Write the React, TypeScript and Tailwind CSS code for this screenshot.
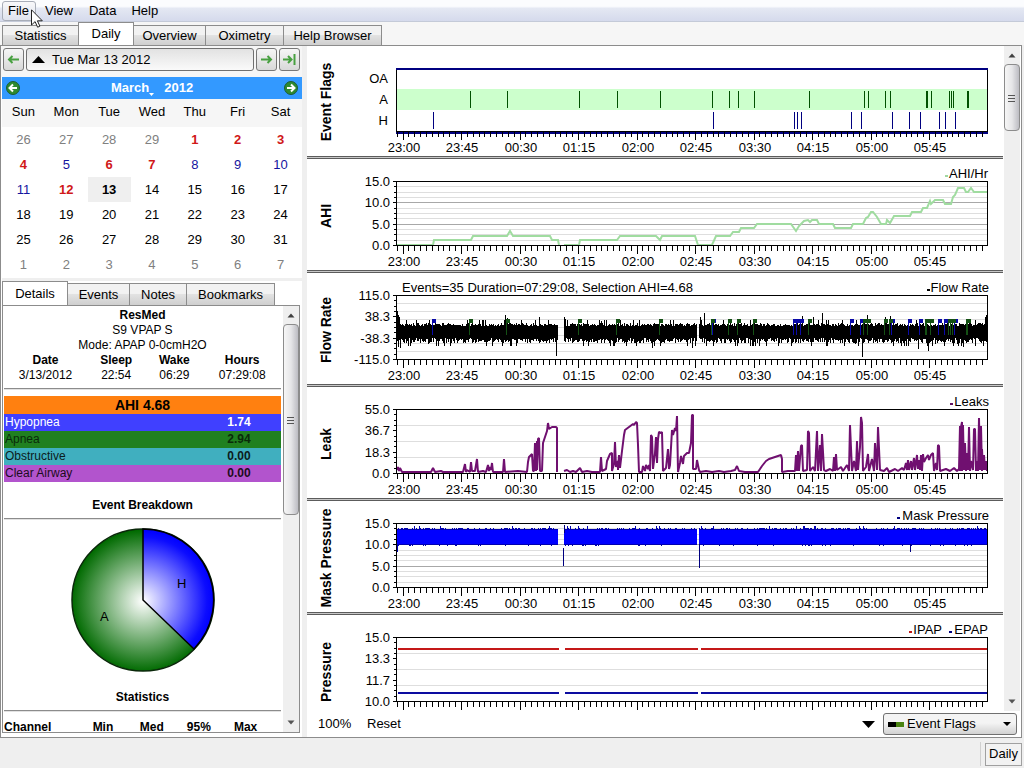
import type { ReactNode } from "react";

const NAVY = "#000080";
const PURPLE = "#701070";

type Point = [number, number];

/* ---------- recorded session data, in plot units ---------- */

const apneaFlags = [
  470, 507, 579, 617, 660, 712, 729, 738, 754, 809, 864, 868, 885, 890, 926, 927, 931, 949, 951, 953, 967, 968,
];
const hypopneaFlags = [433, 713, 794, 797, 801, 851, 861, 892, 909, 920, 939, 945, 955];

const ahiLines: string[] = [
  "397,86 433,86 434,81 471,81 473,77 507,77 510,72 513,77 550,77 552,81 558,81 559,86",
  "564,86 579,86 580,81 617,81 620,77 656,77 660,81 662,77 695,77 698,86 712,86 716,77 730,77 733,73 739,73 741,69 754,69 757,65 791,65 796,72 799,67 804,62 808,61 810,63 812,61 817,61 819,65 833,65 835,69 851,69 853,65 863,65 866,59 868,58 871,53 873,53 877,58 881,65 886,65 887,61 890,64 894,57 910,57 912,53 921,53 923,49 927,49 930,42 931,45 935,41 943,41 945,45 951,45 953,38 955,36 958,29 964,29 966,33 968,33 971,29 974,33 987,33",
];

const leakA: Point[] = [
  [397, 3], [398, 6], [399, 2], [400, 5], [402, 1], [431, 1], [433, 5], [435, 1], [441, 2], [443, 1], [463, 1],
  [465, 9], [466, 1], [467, 3], [470, 1], [471, 11], [472, 2], [475, 2], [477, 14], [478, 1], [483, 2], [486, 1],
  [488, 8], [489, 2], [490, 6], [491, 3], [492, 10], [493, 1], [503, 1], [504, 14], [505, 1], [518, 2], [527, 1],
  [528, 11], [529, 16], [532, 19], [533, 2], [534, 2], [535, 30], [536, 2], [537, 32], [537, 3], [538, 34],
  [539, 35], [540, 2], [542, 2], [543, 30], [545, 36], [547, 42], [548, 50], [549, 44], [552, 46], [556, 46],
  [557, 45], [557, 1],
];

const leakB: Point[] = [
  [564, 2], [567, 3], [570, 1], [573, 2], [576, 1], [580, 5], [582, 1], [587, 2], [592, 1], [600, 1], [601, 16],
  [602, 2], [606, 4], [607, 12], [610, 19], [612, 20], [612, 2], [614, 9], [615, 31], [616, 6], [618, 12],
  [618, 3], [619, 18], [620, 5], [622, 22], [624, 38], [625, 43], [629, 46], [633, 49], [634, 48], [636, 51],
  [637, 50], [638, 28], [639, 1], [642, 1], [643, 7], [645, 2], [646, 8], [648, 4], [649, 8], [650, 2], [651, 38],
  [652, 36], [653, 4], [655, 20], [656, 36], [657, 10], [658, 34], [659, 41], [661, 40], [662, 41], [663, 2],
  [666, 5], [668, 24], [669, 4], [670, 8], [672, 43], [673, 38], [675, 45], [676, 42], [677, 57], [678, 1],
  [680, 10], [681, 17], [683, 9], [684, 17], [687, 20], [689, 20], [691, 30], [692, 58], [693, 58], [693, 4],
  [696, 4], [697, 13], [699, 3], [700, 1], [706, 2], [712, 1], [719, 2], [724, 1], [731, 2], [735, 3], [737, 7],
  [739, 2], [745, 1], [758, 1], [762, 7], [766, 12], [769, 14], [775, 16], [778, 17], [781, 18], [782, 14],
  [782, 1], [788, 2], [795, 2], [796, 18], [797, 2], [798, 22], [799, 2], [801, 27], [802, 28], [803, 2],
  [807, 3], [808, 42], [809, 40], [810, 2], [813, 6], [815, 2], [817, 42], [818, 2], [820, 28], [821, 2],
  [822, 39], [824, 3], [826, 2], [830, 4], [833, 2], [834, 16], [835, 2], [836, 19], [837, 3], [841, 6], [843, 2],
  [847, 8], [849, 2], [850, 48], [852, 2], [854, 12], [856, 2], [857, 32], [858, 3], [860, 26], [861, 56],
  [862, 50], [863, 2], [866, 6], [868, 19], [869, 2], [872, 14], [874, 2], [875, 30], [877, 3], [878, 46],
  [880, 3], [884, 2], [887, 5], [889, 1], [895, 4], [898, 2], [902, 5], [904, 3], [906, 10], [907, 3], [908, 13],
  [909, 3], [911, 12], [912, 3], [914, 15], [915, 3], [917, 18], [918, 4], [919, 13], [920, 3], [921, 18],
  [922, 2], [923, 19], [924, 11], [926, 15], [928, 18], [929, 13], [931, 18], [933, 20], [934, 2], [936, 10],
  [937, 3], [938, 28], [939, 27], [940, 2], [946, 4], [950, 2], [954, 5], [957, 2], [959, 4], [960, 47], [960, 2],
  [961, 46], [962, 51], [962, 2], [963, 48], [964, 3], [965, 30], [966, 2], [967, 20], [968, 3], [969, 46],
  [970, 2], [971, 12], [973, 3], [974, 44], [975, 44], [976, 2], [977, 12], [978, 2], [979, 55], [980, 3],
  [981, 47], [982, 2], [982, 24], [983, 3], [984, 18], [985, 3], [986, 12], [987, 2],
];

const hourLabels = ["23:00", "23:45", "00:30", "01:15", "02:00", "02:45", "03:30", "04:15", "05:00", "05:45"];

function noise(n: number, seed: number) {
  const v = Math.sin(n * 12.9898 + seed * 78.233) * 43758.5453;
  return v - Math.floor(v);
}

function inGap(x: number) {
  return (x >= 558 && x < 564) || (x >= 697 && x < 699);
}

function flowPath() {
  const peaks: Record<number, number> = {
    397: 38, 398: 42, 399: 44, 505: 42, 507: 45, 539: 44, 564: 44, 565: 46, 601: 48, 704: 40, 700: 44, 822: 40,
    802: 43, 813: 44, 867: 42, 885: 44, 890: 43, 986: 42, 985: 44,
  };
  const dips: Record<number, number> = {
    397: 68, 398: 74, 400: 75, 556: 83, 652: 75, 692: 75, 862: 84, 918: 76, 928: 78, 963: 74,
  };
  let d = "";
  for (let x = 397; x < 988; x++) {
    if (inGap(x)) continue;
    const a = noise(x, 1);
    const b = noise(x, 2);
    const top = peaks[x] ?? (a > 0.93 ? 47 : Math.round(53 - a * 3));
    const bottom = dips[x] ?? (b > 0.92 ? 73 : Math.round(65 + b * 6));
    d += `M${x} ${top}h1V${bottom}h-1z`;
  }
  return d;
}

function maskPath() {
  let d = "";
  for (let x = 397; x < 988; x++) {
    if (inGap(x)) continue;
    const a = noise(x, 3);
    const b = noise(x, 4);
    const top = a > 0.95 ? 25 : a > 0.6 ? 27 : 28;
    const bottom = x === 397 ? 51 : b > 0.9 ? 45 : 44;
    d += `M${x} ${top}h1V${bottom}h-1z`;
  }
  return d;
}

/* ---------- charts ---------- */

type ChartProps = {
  title: string;
  viewBox?: string;
  hideTimes?: boolean;
  labels?: string[];
  grid?: { step: number; strong: boolean };
  legend?: { color: string; text: string; dash: number; x: number }[];
  children: ReactNode;
};

function TimeAxis({ hideTimes }: { hideTimes: boolean }) {
  const ticks = [];
  for (let i = -1; i < 100; i++) {
    const x = Math.round(402.5 + i * 5.85);
    ticks.push(<rect key={i} x={x} y={86} width={1} height={i % 10 === 0 ? 9 : 6} fill="#000" />);
  }
  return (
    <g>
      {ticks}
      {!hideTimes &&
        hourLabels.map((t, i) => (
          <text key={t} x={Math.round(403.5 + i * 58.5)} y={107} textAnchor="middle">
            {t}
          </text>
        ))}
    </g>
  );
}

function Chart({ title, viewBox = "307 0 696 111", hideTimes = false, labels, grid, legend = [], children }: ChartProps) {
  const lines = [];
  if (grid) {
    for (let k = 1; k * grid.step < 63; k++) {
      const strong = grid.strong && k % 4 === 0;
      lines.push(
        <rect key={k} x={397} y={Math.round(22 + k * grid.step)} width={590} height={1} fill={strong ? "#a8a8a8" : "#dedede"} />,
      );
    }
  }
  return (
    <section className="shrink-0">
      <svg
        viewBox={viewBox}
        className="block w-full font-['Liberation_Sans',Arial,sans-serif] text-[13px]"
        shapeRendering="crispEdges"
        role="img"
        aria-label={title}
      >
        <text transform="translate(331 57) rotate(-90)" textAnchor="middle" fontSize={14} fontWeight={700}>
          {title}
        </text>
        {lines}
        {children}
        {labels && (
          <g>
            <path d="M396.5 22.5H987.5V86.5H396.5z" fill="none" stroke="#000" />
            {Array.from({ length: 13 }, (_, i) => (
              <rect
                key={i}
                x={i % 4 === 0 ? 393 : 394}
                y={Math.round(22 + (i * 64) / 12)}
                width={i % 4 === 0 ? 4 : 3}
                height={1}
                fill="#000"
              />
            ))}
            {labels.map((t, i) => (
              <text key={t} x={390} y={Math.round(27 + (i * 64) / 3)} textAnchor="end">
                {t}
              </text>
            ))}
          </g>
        )}
        <TimeAxis hideTimes={hideTimes} />
        {legend.map((l) => (
          <g key={l.text}>
            <rect x={l.dash} y={16} width={3} height={2} fill={l.color} />
            <text x={l.x} y={19} textAnchor="end">
              {l.text}
            </text>
          </g>
        ))}
      </svg>
      {!hideTimes && <div className="h-[3px] border-y border-[#5c5c5c] bg-[#c8c8c8]" />}
    </section>
  );
}

function EventFlagsChart() {
  return (
    <Chart title="Event Flags" viewBox="307 1 696 110">
      <rect x={397} y={44} width={590} height={21} fill="#ccffcc" />
      <path d="M396.5 23V87M987.5 23V87" stroke="#000" />
      <rect x={396} y={23} width={592} height={2} fill={NAVY} />
      <rect x={396} y={86} width={592} height={3} fill={NAVY} />
      <rect x={396} y={86} width={592} height={1} fill="#000" />
      {apneaFlags.map((x) => (
        <rect key={x} x={x} y={46} width={1} height={17} fill="#005000" />
      ))}
      {hypopneaFlags.map((x) => (
        <rect key={x} x={x} y={67} width={1} height={17} fill={NAVY} />
      ))}
      {["OA", "A", "H"].map((t, i) => (
        <text key={t} x={388} y={38 + i * 21} textAnchor="end">
          {t}
        </text>
      ))}
    </Chart>
  );
}

function AhiChart() {
  return (
    <Chart
      title="AHI"
      labels={["15.0", "10.0", "5.0", "0.0"]}
      grid={{ step: 16 / 3, strong: true }}
      legend={[{ color: "#a0d8a0", text: "AHI/Hr", dash: 945, x: 988 }]}
    >
      {ahiLines.map((p) => (
        <polyline key={p} points={p} fill="none" stroke="#a0dca0" strokeWidth={2} shapeRendering="auto" />
      ))}
    </Chart>
  );
}

function FlowChart() {
  const mark = (x: number, color: string) => (
    <path key={`${color}${x}`} d={`M${x - 1} 46h4v4h-3v12h-1v-12z`} fill={color} />
  );
  return (
    <Chart
      title="Flow Rate"
      labels={["115.0", "38.3", "-38.3", "-115.0"]}
      grid={{ step: 8, strong: false }}
      legend={[{ color: "#000", text: "Flow Rate", dash: 927, x: 989 }]}
    >
      <text x={402} y={19}>
        Events=35 Duration=07:29:08, Selection AHI=4.68
      </text>
      <path d={flowPath()} fill="#000" />
      {hypopneaFlags.map((x) => mark(x, "#0a0aa8"))}
      {apneaFlags.map((x) => mark(x, "#145014"))}
    </Chart>
  );
}

function LeakChart() {
  const toPoints = (pts: Point[]) => pts.map(([x, h]) => `${x},${86 - h}`).join(" ");
  return (
    <Chart
      title="Leak"
      labels={["55.0", "36.7", "18.3", "0.0"]}
      grid={{ step: 16, strong: false }}
      legend={[{ color: "#601060", text: "Leaks", dash: 950, x: 989 }]}
    >
      {[leakA, leakB].map((s, i) => (
        <polyline key={i} points={toPoints(s)} fill="none" stroke={PURPLE} strokeWidth={2} strokeLinejoin="bevel" shapeRendering="auto" />
      ))}
    </Chart>
  );
}

function MaskPressureChart() {
  return (
    <Chart
      title="Mask Pressure"
      labels={["15.0", "10.0", "5.0", "0.0"]}
      grid={{ step: 16 / 3, strong: true }}
      legend={[{ color: NAVY, text: "Mask Pressure", dash: 897, x: 989 }]}
    >
      <path d={maskPath()} fill="#0000b0" />
      <path d="M397 29H558V43H397zM564 29H697V43H564zM699 29H987V43H699z" fill="#0000ff" />
      <path d="M563 47h1v18h-1zM564 24h1v8h-1zM699 43h1v24h-1zM910 43h1v8h-1z" fill={NAVY} />
    </Chart>
  );
}

function PressureChart() {
  return (
    <Chart
      title="Pressure"
      viewBox="307 0 696 96"
      hideTimes
      labels={["15.0", "13.3", "11.7", "10.0"]}
      grid={{ step: 16, strong: false }}
      legend={[
        { color: "#c01818", text: "IPAP", dash: 909, x: 942 },
        { color: NAVY, text: "EPAP", dash: 949, x: 988 },
      ]}
    >
      <path d="M398 33h161v2H398zM565 33h133v2H565zM701 33h286v2H701z" fill="#c41818" />
      <path d="M398 77h161v2H398zM565 77h133v2H565zM701 77h286v2H701z" fill="#0c0ca0" />
    </Chart>
  );
}

/* ---------- shared widgets ---------- */

function ScrollBar({ thumb }: { thumb: ReactNode }) {
  return (
    <div className="flex w-4 shrink-0 flex-col bg-[#efefef]" aria-hidden="true">
      <svg viewBox="0 0 16 18" className="h-[18px] w-4 shrink-0">
        <path d="M4.500 11.500L8 7.500l3.500 4z" fill="#404040" />
      </svg>
      {thumb}
      <div className="flex-1" />
      <svg viewBox="0 0 16 18" className="h-[18px] w-4 shrink-0">
        <path d="M4.500 6.500L8 10.500l3.500-4z" fill="#555" />
      </svg>
    </div>
  );
}

function Grip() {
  return (
    <svg viewBox="0 0 8 8" className="h-2 w-2">
      <path d="M0 1.500h7M0 4.500h7M0 7.500h7" stroke="#555" />
    </svg>
  );
}

const thumbStyle =
  "flex w-4 items-center justify-center rounded-sm border border-[#8c8c8c] bg-linear-to-r from-[#f6f6f6] via-[#e6e6e8] to-[#bcbcc2]";
const tabOff =
  "flex items-center justify-center border border-b-0 border-[#8c8c8c] bg-linear-to-b from-[#f2f2f2] from-45% via-[#e2e2e2] via-50% to-[#cfcfcf]";
const smallButton =
  "flex h-[23px] w-[21px] items-center justify-center rounded-[3px] border border-[#777] bg-linear-to-b from-[#f6f6f6] to-[#d8d8d8]";

function MenuBar() {
  return (
    <nav className="flex h-[22px] items-center border-b border-[#c4cad8] bg-linear-to-b from-[#fbfcfe] from-30% via-[#e4e8f3] via-40% to-[#d5daec] pl-0.5">
      <button className="flex h-5 w-[34px] items-center rounded-[3px] border border-[#a8adb8] bg-linear-to-b from-[#f8f8fa] to-[#dfe3ee] pl-[5px]">
        File
      </button>
      <button className="px-[9px]">View</button>
      <button className="px-[7px]">Data</button>
      <button className="px-2">Help</button>
      <svg viewBox="0 0 12 19" className="pointer-events-none absolute top-[9px] left-[31px] z-10 h-[19px] w-3" aria-hidden="true">
        <path d="M.5.8V16l3.600-3.400 2.500 5.600 2.300-1-2.500-5.400h4.900z" fill="#fff" stroke="#222" />
      </svg>
    </nav>
  );
}

function MainTabs() {
  return (
    <nav className="flex h-[23px] items-end bg-[#f6f6f6] pl-0.5">
      <button className={`${tabOff} h-5 w-[76px] border-r-0`}>Statistics</button>
      <button className="flex h-[23px] w-14 items-center justify-center border border-b-0 border-[#8c8c8c] bg-white">Daily</button>
      <button className={`${tabOff} h-5 w-[72px] border-l-0`}>Overview</button>
      <button className={`${tabOff} h-5 w-[78px] border-l-0`}>Oximetry</button>
      <button className={`${tabOff} h-5 w-[98px] border-l-0`}>Help Browser</button>
    </nav>
  );
}

/* ---------- left column ---------- */

function DayNavigator() {
  return (
    <div className="flex h-[31px] items-start gap-0.5 bg-[#f6f6f6] px-0.5 pt-0.5">
      <button className={smallButton} aria-label="Previous day">
        <svg viewBox="0 0 13 11" className="h-[11px] w-[13px]">
          <path d="M12 5.500H2M5.500 2L2 5.500 5.500 9" fill="none" stroke="#48a040" strokeWidth="2" />
        </svg>
      </button>
      <button className="flex h-[23px] min-w-0 flex-1 items-center gap-[7px] rounded-[3px] border border-[#707070] bg-linear-to-b from-[#e2e2e2] to-[#fafafa] pl-[5px]">
        <svg viewBox="0 0 13 7" className="h-[7px] w-[13px]">
          <path d="M0 7L6.500 0 13 7z" fill="#000" />
        </svg>
        Tue Mar 13 2012
      </button>
      <button className={smallButton} aria-label="Next day">
        <svg viewBox="0 0 13 11" className="h-[11px] w-[13px]">
          <path d="M1 5.500h10M7.500 2L11 5.500 7.500 9" fill="none" stroke="#48a040" strokeWidth="2" />
        </svg>
      </button>
      <button className={smallButton} aria-label="Most recent day">
        <svg viewBox="0 0 15 13" className="h-[13px] w-[15px]">
          <path d="M1 6.500h8M6 3l3.500 3.500L6 10" fill="none" stroke="#48a040" strokeWidth="2" />
          <path d="M12.500 1v11" stroke="#48a040" strokeWidth="2" />
        </svg>
      </button>
    </div>
  );
}

function RoundArrow({ right }: { right?: boolean }) {
  return (
    <svg viewBox="0 0 14 14" className="h-3.5 w-3.5">
      <circle cx="7" cy="7" r="6.500" fill="#2f8a30" stroke="#1c5c38" />
      <path
        d={right ? "M3 7h7M7 3.500L10.500 7 7 10.500" : "M11 7H4M7 3.500L3.500 7 7 10.500"}
        fill="none"
        stroke="#fff"
        strokeWidth="2"
      />
    </svg>
  );
}

type Tone = "dim" | "red" | "blue" | "black" | "today";
const toneClass: Record<Tone, string> = {
  dim: "text-[#808080]",
  red: "font-bold text-[#d01818]",
  blue: "text-[#1414a0]",
  black: "text-black",
  today: "font-bold text-black bg-[#efefef]",
};

function toneOf(week: number, day: number): Tone {
  if ((week === 0 && day > 20) || week === 5) return "dim";
  if (day === 13) return "today";
  if ([1, 2, 3, 4, 6, 7, 12].includes(day)) return "red";
  return day < 12 ? "blue" : "black";
}

function Calendar() {
  const weeks = Array.from({ length: 6 }, (_, w) =>
    Array.from({ length: 7 }, (_, d) => {
      const n = w * 7 + d - 3;
      return n < 1 ? 29 + n : n > 31 ? n - 31 : n;
    }),
  );
  return (
    <div className="bg-white pb-px">
      <div className="flex h-[22px] items-center justify-between bg-[#3399ff] px-1 font-bold text-white">
        <button aria-label="Previous month">
          <RoundArrow />
        </button>
        <div className="flex gap-2.5">
          <button className="flex items-end">
            March
            <svg viewBox="0 0 5 3" className="h-[3px] w-[5px]">
              <path d="M0 0h5L2.500 3z" fill="#fff" />
            </svg>
          </button>
          <button>2012</button>
        </div>
        <button aria-label="Next month">
          <RoundArrow right />
        </button>
      </div>
      <table className="w-full table-fixed border-collapse text-center">
        <thead>
          <tr className="h-7 bg-[#f6f6f6]">
            {["Sun", "Mon", "Tue", "Wed", "Thu", "Fri", "Sat"].map((d) => (
              <th key={d} className="p-0 pb-0.5 font-normal">
                {d}
              </th>
            ))}
          </tr>
        </thead>
        <tbody>
          {weeks.map((week, w) => (
            <tr key={w} className="h-[25px]">
              {week.map((n, d) => (
                <td key={d} className="p-0">
                  <button className={`h-[25px] w-full ${toneClass[toneOf(w, n)]}`}>{n}</button>
                </td>
              ))}
            </tr>
          ))}
        </tbody>
      </table>
    </div>
  );
}

function Pie() {
  return (
    <svg viewBox="0 0 144 144" className="mx-auto mt-2 block h-36 w-36 text-[13px]" role="img" aria-label="Event breakdown">
      <defs>
        <radialGradient id="apnea" gradientUnits="userSpaceOnUse" cx="72" cy="73" r="71">
          <stop offset="0" stopColor="#fff" />
          <stop offset="1" stopColor="#006a00" />
        </radialGradient>
        <radialGradient id="hypopnea" gradientUnits="userSpaceOnUse" cx="72" cy="73" r="71">
          <stop offset="0" stopColor="#fff" />
          <stop offset="0.900" stopColor="#0c0cff" />
          <stop offset="1" stopColor="#0000ff" />
        </radialGradient>
      </defs>
      <circle cx="72" cy="72" r="71" fill="url(#apnea)" stroke="#0a280a" strokeWidth="1.500" />
      <path d="M72 72V1A71 71 0 0 1 123 121z" fill="url(#hypopnea)" stroke="#000" strokeWidth="1.500" />
      <text x="106" y="60">H</text>
      <text x="29" y="93">A</text>
    </svg>
  );
}

const events = [
  { name: "Hypopnea", value: "1.74", style: "bg-[#4040ff] text-white" },
  { name: "Apnea", value: "2.94", style: "bg-[#208020] text-[#0a2a0a]" },
  { name: "Obstructive", value: "0.00", style: "bg-[#40afbf] text-[#0c1c20]" },
  { name: "Clear Airway", value: "0.00", style: "bg-[#b254cd] text-[#1c0c20]" },
];

function Details() {
  const rule = "h-0.5 border-t border-[#8c8c8c] bg-[#e2e2e2]";
  return (
    <div className="flex min-h-0 flex-1 border border-[#8c8c8c] bg-white">
      <div className="min-w-0 flex-1 overflow-hidden pt-0.5 pr-0.5 pl-px text-center text-[12px] leading-[15px]">
        <div className="font-bold">ResMed</div>
        <div>S9 VPAP S</div>
        <div>Mode: APAP 0-0cmH2O</div>
        <table className="w-full table-fixed border-collapse">
          <colgroup>
            <col className="w-[30%]" />
            <col className="w-[21%]" />
            <col className="w-[21%]" />
            <col className="w-[28%]" />
          </colgroup>
          <thead>
            <tr>
              <th className="p-0">Date</th>
              <th className="p-0">Sleep</th>
              <th className="p-0">Wake</th>
              <th className="p-0">Hours</th>
            </tr>
          </thead>
          <tbody>
            <tr>
              <td className="p-0">3/13/2012</td>
              <td className="p-0">22:54</td>
              <td className="p-0">06:29</td>
              <td className="p-0">07:29:08</td>
            </tr>
          </tbody>
        </table>
        <div className={`${rule} mt-[5px]`} />
        <div className="mt-1.5 bg-[#ff8010] text-[14px] leading-[18px] font-bold">AHI 4.68</div>
        <table className="w-full table-fixed border-collapse">
          <tbody>
            {events.map((e) => (
              <tr key={e.name} className={`h-[17px] ${e.style}`}>
                <td className="p-0 pl-px text-left">{e.name}</td>
                <td className="w-[84px] p-0 font-bold">{e.value}</td>
              </tr>
            ))}
          </tbody>
        </table>
        <h2 className="mt-4 font-bold">Event Breakdown</h2>
        <div className={`${rule} mt-[5px]`} />
        <Pie />
        <h2 className="mt-[18px] font-bold">Statistics</h2>
        <div className={`${rule} mt-[5px]`} />
        <table className="mt-2 w-full table-fixed border-collapse text-left">
          <thead>
            <tr>
              <th className="w-[32%] p-0">Channel</th>
              <th className="p-0">Min</th>
              <th className="p-0">Med</th>
              <th className="p-0">95%</th>
              <th className="p-0">Max</th>
            </tr>
          </thead>
        </table>
      </div>
      <ScrollBar
        thumb={
          <div className={`${thumbStyle} h-[191px]`}>
            <Grip />
          </div>
        }
      />
    </div>
  );
}

function LeftColumn() {
  return (
    <aside className="flex w-[301px] shrink-0 flex-col">
      <DayNavigator />
      <div className="flex min-h-0 flex-1 flex-col pl-px">
        <Calendar />
        <div className="h-[3px] bg-[#efefef]" />
        <div className="flex min-h-0 flex-1 flex-col pr-0.5 pb-1">
          <nav className="flex h-6 items-end">
            <button className="flex h-6 w-[66px] items-center justify-center border border-b-0 border-[#8c8c8c] bg-white">
              Details
            </button>
            <button className={`${tabOff} h-[22px] w-[62px] border-l-0`}>Events</button>
            <button className={`${tabOff} h-[22px] w-[57px] border-l-0`}>Notes</button>
            <button className={`${tabOff} h-[22px] w-[88px] border-l-0`}>Bookmarks</button>
          </nav>
          <Details />
        </div>
      </div>
    </aside>
  );
}

/* ---------- right column ---------- */

function GraphFooter() {
  return (
    <footer className="flex h-[26px] shrink-0 items-center bg-white pr-1 pl-[11px]">
      <span className="w-[49px]">100%</span>
      <button>Reset</button>
      <div className="flex-1" />
      <button aria-label="Show graph list">
        <svg viewBox="0 0 13 7" className="h-[7px] w-[13px]">
          <path d="M0 0h13L6.500 7z" fill="#000" />
        </svg>
      </button>
      <label className="relative ml-2 flex h-[22px] w-[134px] items-center rounded-[3px] border border-[#707070] bg-linear-to-b from-[#f4f4f4] from-45% to-[#d2d2d2]">
        <svg viewBox="0 0 16 5" className="ml-1 h-[5px] w-4" aria-hidden="true">
          <path d="M0 0h8v5H0z" fill="#000" />
          <path d="M8 0h8v5H8z" fill="#4a8412" />
        </svg>
        <select aria-label="Graph" className="min-w-0 flex-1 appearance-none bg-transparent pl-[3px] outline-none">
          <option>Event Flags</option>
        </select>
        <svg viewBox="0 0 8 4" className="pointer-events-none mr-[5px] h-1 w-2" aria-hidden="true">
          <path d="M0 0h8L4 4z" fill="#000" />
        </svg>
      </label>
    </footer>
  );
}

function Graphs() {
  return (
    <main className="flex min-w-0 flex-1 flex-col">
      <div className="flex min-h-0 flex-1 pr-px">
        <div className="flex min-w-0 flex-1 flex-col overflow-hidden bg-white pr-px">
          <EventFlagsChart />
          <AhiChart />
          <FlowChart />
          <LeakChart />
          <MaskPressureChart />
          <PressureChart />
        </div>
        <ScrollBar
          thumb={
            <div className={`${thumbStyle} h-[67px]`}>
              <Grip />
            </div>
          }
        />
      </div>
      <GraphFooter />
    </main>
  );
}

export default function App() {
  return (
    <div className="relative flex h-screen flex-col overflow-hidden bg-[#efefef] font-['Liberation_Sans',Arial,sans-serif] text-[13px] leading-4 text-black">
      <MenuBar />
      <MainTabs />
      <div className="mr-0.5 flex min-h-0 flex-1 border border-[#8c8c8c] bg-white">
        <LeftColumn />
        <div className="w-[5px] shrink-0 bg-[#efefef]" />
        <Graphs />
      </div>
      <footer className="flex h-[30px] shrink-0 items-center justify-end gap-1 pt-0.5 pr-0.5">
        <div className="h-6 w-px bg-[#d0d0d0]" />
        <button className="flex h-[23px] w-[37px] items-center justify-center border border-[#a0a0a0] bg-[#f2f2f2]">Daily</button>
      </footer>
    </div>
  );
}
